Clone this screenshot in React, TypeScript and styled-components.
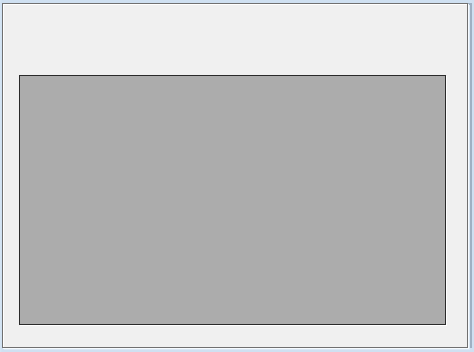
import React from "react";
import styled, { createGlobalStyle } from "styled-components";

const Global = createGlobalStyle`
  html, body { margin: 0; padding: 0; }
  body {
    width: 474px;
    height: 352px;
    overflow: hidden;
    background: #c4d9ee;
    font-family: "Liberation Sans", Arial, sans-serif;
  }
`;

const Desktop = styled.div`
  width: 474px;
  height: 352px;
  box-sizing: border-box;
  padding: 3px 0 0 2px;
  background: linear-gradient(to right, #d6e6f5 0px, #cfe0f1 2px);
  display: flex;
  align-items: flex-start;
`;

const Window = styled.div`
  width: 466px;
  height: 345px;
  box-sizing: border-box;
  border: 1px solid #707070;
  background: #f0f0f0;
  box-shadow: inset 1px 1px 0 #ffffff, 1px 1px 0 #f7fbff, 2px 2px 0 #dbe8f5,
    4px 0 0 #9fb0c2;
  padding: 71px 21px 22px 16px;
  display: flex;
`;

const Canvas = styled.div`
  flex: 1;
  box-sizing: border-box;
  border: 1px solid #2a2a2a;
  background: #acacac;
  box-shadow: 1px 1px 0 #ffffff;
`;

export default function App() {
  return (
    <>
      <Global />
      <Desktop>
        <Window>
          <Canvas />
        </Window>
      </Desktop>
    </>
  );
}
